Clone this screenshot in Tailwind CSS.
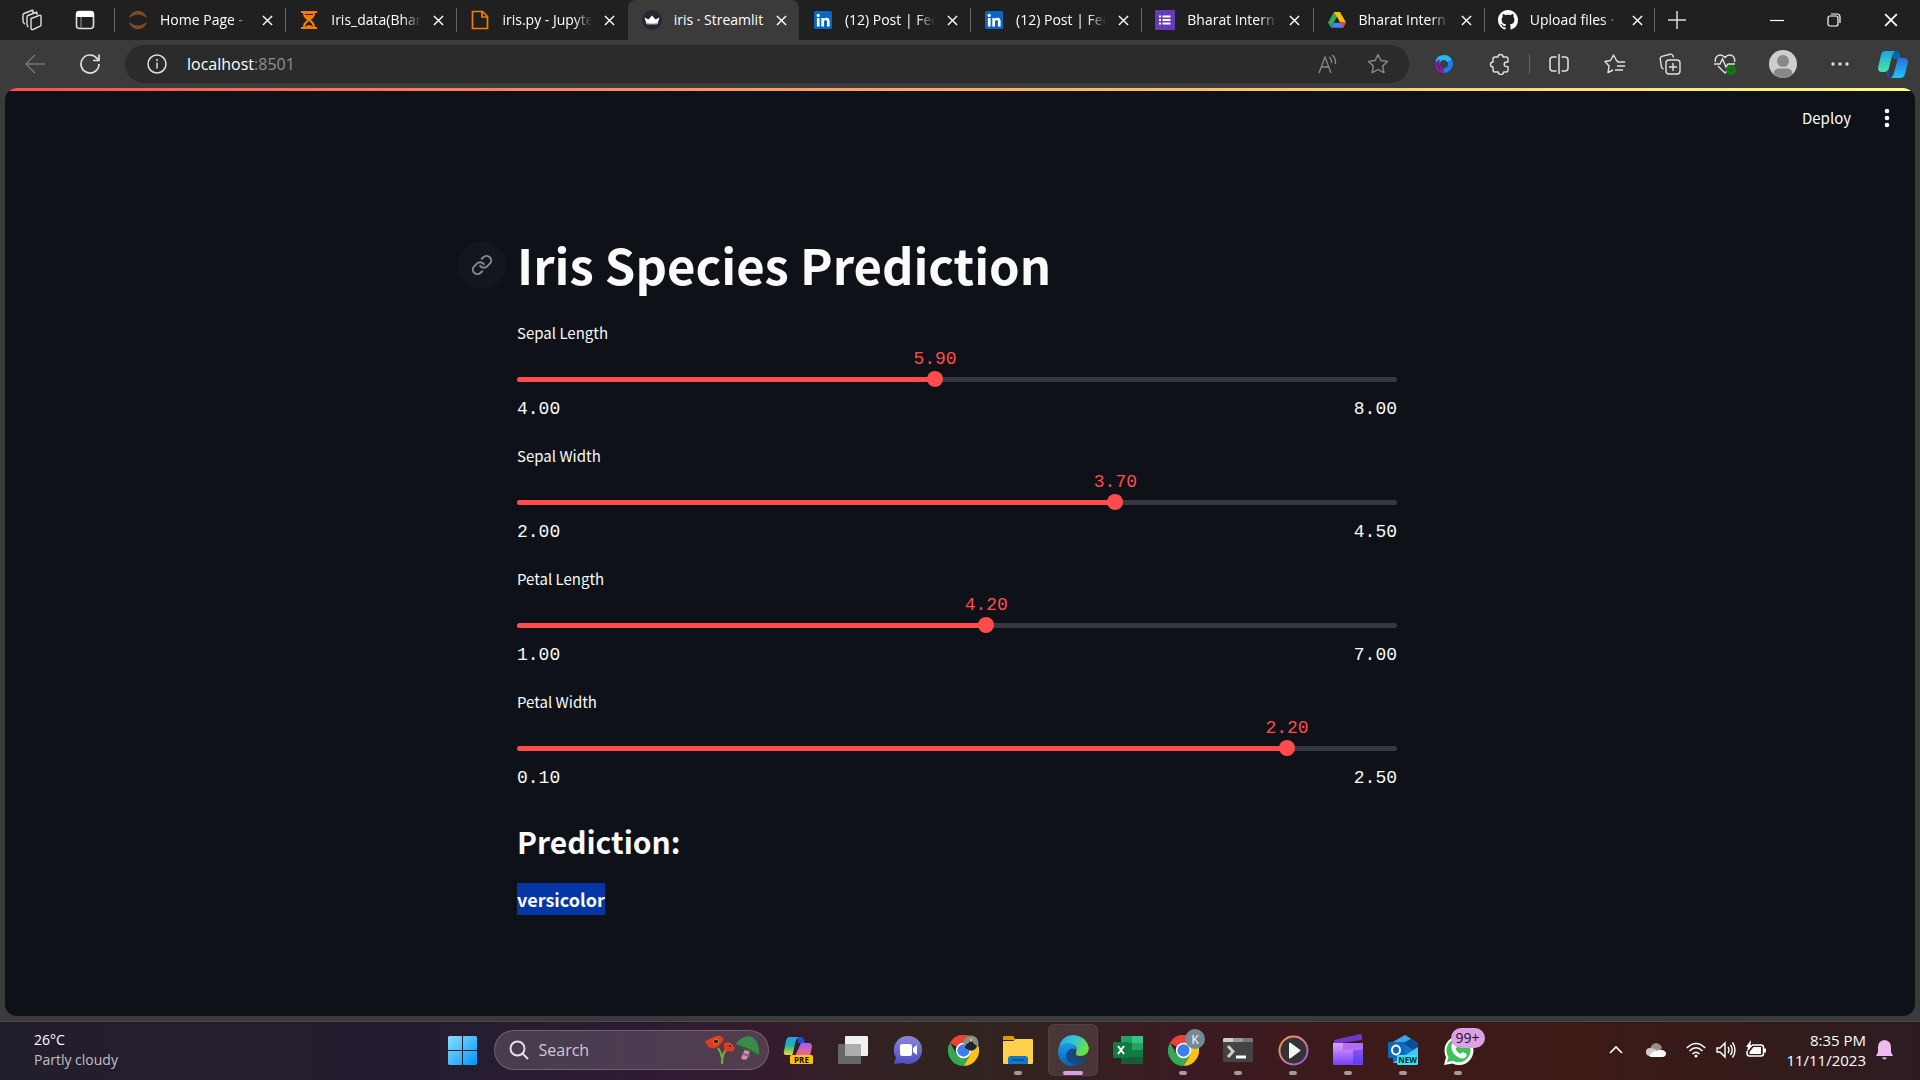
<!DOCTYPE html>
<html lang="en">
<head>
<meta charset="utf-8">
<meta name="viewport" content="width=device-width, initial-scale=1">
<title>iris · Streamlit</title>
<script src="https://cdn.jsdelivr.net/npm/@tailwindcss/browser@4"></script>
</head>
<body class="flex min-h-screen flex-col bg-[#3b3b3b] font-['Open_Sans','Noto_Sans',sans-serif] text-white">

<svg class="hidden" aria-hidden="true">
  <symbol id="x" viewBox="0 0 12 12"><path d="M1 1l10 10M11 1L1 11" fill="none" stroke="currentColor" stroke-width="1.500"/></symbol>
  <symbol id="linkedin" viewBox="0 0 20 20"><rect x="1" y="1" width="18" height="18" rx="1.500" fill="#0a66c2"/><circle cx="5.200" cy="5.400" r="1.600" fill="#fff"/><path d="M3.900 8h2.700v8.400H3.900zM8.300 8h2.500v1.200c.5-.8 1.400-1.400 2.700-1.400 2.500 0 3.100 1.700 3.100 3.900v4.700h-2.600v-4.200c0-1.100-.1-2.200-1.400-2.200s-1.600 1-1.600 2.200v4.200H8.300z" fill="#fff"/></symbol>
  <symbol id="chrome" viewBox="0 0 48 48"><path d="M24 24L3.200 12A24 24 0 0 1 44.800 12z" fill="#ea4335"/><path d="M24 0A24 24 0 0 1 44.800 12H24L13.600 18 3.200 12A24 24 0 0 1 24 0z" fill="#ea4335"/><path d="M44.800 12A24 24 0 0 1 24 48l10.400-18L34 18l-10-6z" fill="#fbc116"/><path d="M3.200 12A24 24 0 0 0 24 48l10.400-18L24 34l-10.400-4z" fill="#34a853"/><circle cx="24" cy="24" r="12" fill="#fff"/><circle cx="24" cy="24" r="9.500" fill="#3b7ded"/></symbol>
</svg>

<!-- Tab strip -->
<header class="flex h-10 bg-[#202020] text-sm">
  <div class="flex w-[114px] shrink-0 items-center gap-8 pl-[21px]">
    <button aria-label="Workspaces"><svg class="h-[22px] w-[22px]" viewBox="0 0 22 22" fill="none" stroke="#ddd" stroke-width="1.400" stroke-linejoin="round"><path d="M10 9.500l8.500-3.200q1.500-.5 1.500 1v8.500q0 1-.8 1.400L12 20.500q-2 .5-2-1.500z"/><path d="M7.500 18Q6 17 6 15.500V8q0-1 1-1.500L16 3M4 15q-2-1-2-3V6q0-1 1-1.500L12 1M16 6V3M12 4V1"/></svg></button>
    <button aria-label="Tab actions"><svg class="h-5 w-5" viewBox="0 0 20 20"><rect x="1.500" y="1.500" width="17" height="17" rx="3" fill="none" stroke="#ddd" stroke-width="1.600"/><path d="M1 7V4q0-3 3-3h12q3 0 3 3v3z" fill="#fff"/><path d="M6 7v11" stroke="#999"/></svg></button>
  </div>
  <nav class="grid flex-1 grid-cols-9" aria-label="Tabs">
    <div class="relative flex items-center gap-3 pl-3.5 before:absolute before:left-0 before:top-2 before:h-6 before:w-px before:bg-[#666]">
      <svg class="h-5 w-5 shrink-0" viewBox="0 0 20 20" fill="#7d4a25"><path d="M1 8a9.200 9.200 0 0 1 18 0Q10 1 1 8zM1 12a9.200 9.200 0 0 0 18 0q-9 7-18 0z"/></svg>
      <a href="#" class="w-[90px] overflow-hidden whitespace-nowrap [mask-image:linear-gradient(to_right,#000_80%,transparent)]">Home Page -</a>
      <button aria-label="Close tab"><svg class="h-[11px] w-[11px]"><use href="#x"/></svg></button>
    </div>
    <div class="relative flex items-center gap-3 pl-3.5 before:absolute before:left-0 before:top-2 before:h-6 before:w-px before:bg-[#666]">
      <svg class="h-5 w-5 shrink-0" viewBox="0 0 20 20"><path d="M2 1h16v2H2zM2 17h16v2H2z" fill="#f57c00"/><path d="M4 3h12c0 4-2 5-4 7 2 2 4 3 4 7H4c0-4 2-5 4-7-2-2-4-3-4-7z" fill="#f57c00"/><path d="M10 11q3 2 4 6H6q1-4 4-6z" fill="#202020"/><path d="M6 4.500h8" stroke="#202020"/><path d="M6 17q4-4 8 0z" fill="#f57c00"/></svg>
      <a href="#" class="w-[90px] overflow-hidden whitespace-nowrap [mask-image:linear-gradient(to_right,#000_80%,transparent)]">Iris_data(Bhar</a>
      <button aria-label="Close tab"><svg class="h-[11px] w-[11px]"><use href="#x"/></svg></button>
    </div>
    <div class="relative flex items-center gap-3 pl-3.5 before:absolute before:left-0 before:top-2 before:h-6 before:w-px before:bg-[#666]">
      <svg class="h-5 w-5 shrink-0" viewBox="0 0 20 20" fill="none" stroke="#f57c00" stroke-width="1.700"><path d="M2.500 1.500h10l5 5v12h-15z"/><path d="M12 1.500V7h5.500"/></svg>
      <a href="#" class="w-[90px] overflow-hidden whitespace-nowrap [mask-image:linear-gradient(to_right,#000_80%,transparent)]">iris.py - Jupyte</a>
      <button aria-label="Close tab"><svg class="h-[11px] w-[11px]"><use href="#x"/></svg></button>
    </div>
    <div class="flex items-center gap-3 rounded-t-lg bg-[#3b3b3b] pl-3.5">
      <svg class="h-5 w-5 shrink-0" viewBox="0 0 20 20"><circle cx="10" cy="10" r="10" fill="#262730"/><path d="M2.500 7.500l4 2L10 5.500l3.500 4 4-2-2 6.500h-11z" fill="#fff"/><path d="M4.200 12.500q6 2 11.600 0l-.5 2H4.700z" fill="#aaa"/></svg>
      <a href="#" aria-current="page" class="w-[90px] whitespace-nowrap">iris · Streamlit</a>
      <button aria-label="Close tab"><svg class="h-[11px] w-[11px]"><use href="#x"/></svg></button>
    </div>
    <div class="flex items-center gap-3 pl-3.5">
      <svg class="h-5 w-5 shrink-0"><use href="#linkedin"/></svg>
      <a href="#" class="w-[90px] whitespace-nowrap [mask-image:linear-gradient(to_right,#000_80%,transparent)]">(12) Post | Fee</a>
      <button aria-label="Close tab"><svg class="h-[11px] w-[11px]"><use href="#x"/></svg></button>
    </div>
    <div class="relative flex items-center gap-3 pl-3.5 before:absolute before:left-0 before:top-2 before:h-6 before:w-px before:bg-[#666]">
      <svg class="h-5 w-5 shrink-0"><use href="#linkedin"/></svg>
      <a href="#" class="w-[90px] whitespace-nowrap [mask-image:linear-gradient(to_right,#000_80%,transparent)]">(12) Post | Fee</a>
      <button aria-label="Close tab"><svg class="h-[11px] w-[11px]"><use href="#x"/></svg></button>
    </div>
    <div class="relative flex items-center gap-3 pl-3.5 before:absolute before:left-0 before:top-2 before:h-6 before:w-px before:bg-[#666]">
      <svg class="h-5 w-5 shrink-0" viewBox="0 0 20 20"><rect width="20" height="20" rx="1" fill="#673ab7"/><path d="M7.500 5.500h8v2h-8zM7.500 9h8v2h-8zM7.500 12.500h8v2h-8zM4 5.500h2v2H4zM4 9h2v2H4zM4 12.500h2v2H4z" fill="#fff"/></svg>
      <a href="#" class="w-[90px] overflow-hidden whitespace-nowrap [mask-image:linear-gradient(to_right,#000_80%,transparent)]">Bharat Intern</a>
      <button aria-label="Close tab"><svg class="h-[11px] w-[11px]"><use href="#x"/></svg></button>
    </div>
    <div class="relative flex items-center gap-3 pl-3.5 before:absolute before:left-0 before:top-2 before:h-6 before:w-px before:bg-[#666]">
      <svg class="h-5 w-5 shrink-0" viewBox="0 0 20 20"><path d="M7 2h6l-3 5.300L4 17.500 1 12.500z" fill="#34a853"/><path d="M7 2h6l6 10.500h-6z" fill="#fbbc04"/><path d="M7 12.500h12l-3 5.200H4z" fill="#4285f4"/><path d="M13 12.500h6l-3 5.200z" fill="#ea4335"/><path d="M10 7.300l3 5.200H7z" fill="#202020"/></svg>
      <a href="#" class="w-[90px] overflow-hidden whitespace-nowrap [mask-image:linear-gradient(to_right,#000_80%,transparent)]">Bharat Intern</a>
      <button aria-label="Close tab"><svg class="h-[11px] w-[11px]"><use href="#x"/></svg></button>
    </div>
    <div class="relative flex items-center gap-3 pl-3.5 before:absolute before:left-0 before:top-2 before:h-6 before:w-px before:bg-[#666] after:absolute after:right-0 after:top-2 after:h-6 after:w-px after:bg-[#666]">
      <svg class="h-5 w-5 shrink-0" viewBox="0 0 16 16" fill="#fff"><path d="M8 0C3.580 0 0 3.580 0 8c0 3.540 2.290 6.530 5.470 7.590.4.070.55-.17.55-.38 0-.19-.01-.82-.01-1.490-2.010.37-2.530-.49-2.690-.94-.09-.23-.48-.94-.82-1.130-.28-.15-.68-.52-.01-.53.63-.01 1.080.58 1.230.82.72 1.210 1.870.87 2.330.66.07-.52.28-.87.51-1.070-1.780-.2-3.640-.89-3.640-3.950 0-.87.31-1.590.82-2.150-.08-.2-.36-1.020.08-2.120 0 0 .67-.21 2.200.82.64-.18 1.320-.27 2-.27s1.360.09 2 .27c1.530-1.040 2.200-.82 2.200-.82.44 1.100.16 1.920.08 2.120.51.56.82 1.270.82 2.150 0 3.070-1.870 3.750-3.650 3.950.29.25.54.73.54 1.480 0 1.070-.01 1.930-.01 2.200 0 .21.15.46.55.38A8.010 8.010 0 0 0 16 8c0-4.420-3.580-8-8-8z"/></svg>
      <a href="#" class="w-[90px] overflow-hidden whitespace-nowrap [mask-image:linear-gradient(to_right,#000_80%,transparent)]">Upload files ·</a>
      <button aria-label="Close tab"><svg class="h-[11px] w-[11px]"><use href="#x"/></svg></button>
    </div>
  </nav>
  <div class="flex w-[265px] shrink-0 items-center pl-[13px] pr-[22px]">
    <button aria-label="New tab"><svg class="h-[18px] w-[18px]" viewBox="0 0 18 18"><path d="M9 0v18M0 9h18" stroke="#ddd" stroke-width="1.500"/></svg></button>
    <div class="ml-auto flex items-center gap-[43px]">
      <button aria-label="Minimize"><svg class="h-3.5 w-3.5" viewBox="0 0 14 14"><path d="M0 7.500h14" stroke="#fff" stroke-width="1.200"/></svg></button>
      <button aria-label="Restore"><svg class="h-3.5 w-3.5" viewBox="0 0 14 14" fill="none" stroke="#fff" stroke-width="1.200"><rect x="1" y="3" width="10" height="10" rx="2"/><path d="M4 1h6q3 0 3 3v6"/></svg></button>
      <button aria-label="Close"><svg class="h-3.5 w-3.5"><use href="#x"/></svg></button>
    </div>
  </div>
</header>

<!-- Address bar -->
<div class="flex h-12 items-center pl-[25px] pr-3 text-[#e0e0e0]">
  <button aria-label="Back"><svg class="h-5 w-5" viewBox="0 0 20 20" fill="none" stroke="#777" stroke-width="1.400"><path d="M20 10H1M10 1L1 10l9 9"/></svg></button>
  <button aria-label="Refresh" class="ml-[35px]"><svg class="h-5 w-5" viewBox="0 0 20 20" fill="none" stroke="currentColor" stroke-width="1.700"><path d="M19 10a9 9 0 1 1-2.200-5.900L18.500 6M19 0.500v6h-6"/></svg></button>
  <div class="ml-[25px] flex h-[38px] flex-1 items-center rounded-full bg-[#2b2b2b] pl-[22px] pr-5">
    <svg class="h-5 w-5" viewBox="0 0 20 20"><circle cx="10" cy="10" r="9" fill="none" stroke="currentColor" stroke-width="1.500"/><path d="M10 8.500v6" stroke="currentColor" stroke-width="1.500"/><circle cx="10" cy="6" r="1" fill="currentColor"/></svg>
    <a href="#" aria-label="Address" class="ml-5 flex-1 text-base text-white">localhost<span class="text-[#8f8f8f]">:8501</span></a>
    <button aria-label="Read aloud" class="mr-[29px]"><svg class="h-5 w-5" viewBox="0 0 20 20" fill="none" stroke="#8a8a8a" stroke-width="1.300"><path d="M1 19L7 3l6 16M3 13h8M11 3q3 2 2.500 6M14 1q4 3 3.500 9"/></svg></button>
    <button aria-label="Add to favorites"><svg class="h-[22px] w-[22px]" viewBox="0 0 22 22" fill="none" stroke="#8a8a8a" stroke-width="1.400" stroke-linejoin="round"><path d="M11 1.500l2.900 6 6.600.9-4.800 4.600 1.200 6.600L11 16.500l-5.900 3.100 1.200-6.600L1.500 8.400l6.600-.9z"/></svg></button>
  </div>
  <div class="ml-[25px] flex items-center">
    <button aria-label="Loop"><svg class="h-5 w-5" viewBox="0 0 20 20" fill="none" stroke-width="5"><path d="M10 3.500A6.500 6.500 0 0 1 10 16.500" stroke="#1f7cf0"/><path d="M10 16.500A6.500 6.500 0 0 1 4 8" stroke="#9b1a9b"/><path d="M3.800 8A6.500 6.500 0 0 1 10 3.500q4 0 5.500 3.500" stroke="#22b8f0"/><path d="M5 6q-3 5 2 9.500" stroke="#4a1fa0" stroke-width="2"/></svg></button>
    <button aria-label="Extensions" class="ml-[35px]"><svg class="h-[22px] w-[22px]" viewBox="0 0 22 22" fill="none" stroke="currentColor" stroke-width="1.400" stroke-linejoin="round"><path d="M6 4h3a2.500 2.500 0 0 1 5 0h3q2 0 2 2v3h-1.500a2.300 2.300 0 0 0 0 4.600H19V17q0 2-2 2h-2.500a2.600 2.600 0 0 1-5.200 0H6q-2 0-2-2v-3a2.500 2.500 0 0 1 0-5V6q0-2 2-2z"/></svg></button>
    <span class="ml-[18px] h-5 w-px bg-[#666]"></span>
    <button aria-label="Split screen" class="ml-[19px]"><svg class="h-5 w-5" viewBox="0 0 20 20" fill="none" stroke="currentColor" stroke-width="1.500"><path d="M7.500 3H4Q1 3 1 6v8q0 3 3 3h3.500M12.500 3H16q3 0 3 3v8q0 3-3 3h-3.500M10 0v20"/></svg></button>
    <button aria-label="Favorites" class="ml-[35px]"><svg class="h-[22px] w-[22px]" viewBox="0 0 22 22" fill="none" stroke="currentColor" stroke-width="1.400" stroke-linejoin="round"><path d="M14 8l-1.500-.5L9.500 2l-3 5.500L1 8.500 5 13l-1 6.500L9 17M13 9h8M13 13h8M11 17h8"/></svg></button>
    <button aria-label="Collections" class="ml-[33px]"><svg class="h-[22px] w-[22px]" viewBox="0 0 22 22" fill="none" stroke="currentColor" stroke-width="1.400"><rect x="7" y="7" width="14" height="14" rx="3"/><path d="M14 10v8M10 14h8M4.500 16Q3 15.500 2.500 14L1.200 6q-.2-2 1.600-2.600L11 1.200q2-.4 2.800 1.300l.7 2"/></svg></button>
    <button aria-label="Browser essentials" class="ml-[33px]"><svg class="h-[22px] w-[22px]" viewBox="0 0 22 22" fill="none" stroke="currentColor" stroke-width="1.400"><path d="M1.500 9Q.5 4.500 4 2.500q4-1.500 7 2 3-3.500 7-2 3.500 2 2.500 6.500M4 13l7 7 2-2M0 11h6l2.500-5 3.500 8 2-3h7"/><circle cx="17" cy="17" r="5" fill="#107c10" stroke="none"/><path d="M15 17l1.500 1.500L19.500 15.500" stroke="#3b3b3b" stroke-width="1"/></svg></button>
    <button aria-label="Profile" class="ml-[33px]"><svg class="h-7 w-7" viewBox="0 0 28 28"><circle cx="14" cy="14" r="14" fill="#d0cecb"/><circle cx="14" cy="11" r="6" fill="#8a8886"/><path d="M4.500 24Q5 18.500 10 18.500h8q5 0 5.500 5.500Q14 32 4.500 24z" fill="#8a8886"/></svg></button>
    <button aria-label="More" class="ml-[34px]"><svg class="h-[18px] w-[18px]" viewBox="0 0 18 18" fill="currentColor"><circle cx="2" cy="9" r="1.700"/><circle cx="9" cy="9" r="1.700"/><circle cx="16" cy="9" r="1.700"/></svg></button>
    <button aria-label="Copilot" class="ml-[29px]"><svg class="h-[30px] w-[30px]" viewBox="0 0 30 30"><defs><linearGradient id="cp1" x2="0" y2="1"><stop stop-color="#1aa6ea"/><stop offset="1" stop-color="#4fe3a0"/></linearGradient><linearGradient id="cp2" x2="0" y2="1"><stop stop-color="#2472e0"/><stop offset="1" stop-color="#25c3f5"/></linearGradient></defs><path d="M17 2q4 0 5 4l1 4h-8l-2-8z" fill="#0c63b0"/><path d="M7 2h10q-2 1-3 5l-3 12q-1 4-4 4H4q-4 0-4-4L3 6q1-4 4-4z" fill="url(#cp1)"/><path d="M9 21l4 7q-4 0-5-3z" fill="#2440d8"/><path d="M20 9h6q4 0 4 4l-3 12q-1 4-5 4h-9q2-1 3-5z" fill="url(#cp2)"/></svg></button>
  </div>
</div>

<!-- Streamlit page -->
<div class="mx-[5px] mb-[5px] flex flex-1 flex-col overflow-hidden rounded-xl bg-[#0e1117] font-['Noto_Sans_CJK_SC','Noto_Sans',sans-serif] text-[#fafafa]">
  <div class="h-[3px] bg-linear-to-r from-[#ff4b4b] to-[#fffd80]"></div>
  <div class="flex h-[54px] items-center justify-end gap-[29px] pr-[21px]">
    <button class="text-[15px]">Deploy</button>
    <button aria-label="Main menu"><svg class="h-5 w-3.5" viewBox="0 0 14 20" fill="currentColor"><circle cx="7" cy="3" r="2.300"/><circle cx="7" cy="10" r="2.300"/><circle cx="7" cy="17" r="2.300"/></svg></button>
  </div>
  
  <div class="pt-[84px] pr-1.5">
  <main class="mx-auto w-full max-w-[880px]">
    <div class="relative">
      <a href="#iris" aria-label="Link to heading" class="absolute top-3 right-full mr-[11px] flex h-12 w-12 items-center justify-center rounded-full bg-[#12161e]"><svg class="h-[22px] w-[22px]" viewBox="0 0 24 24" fill="none" stroke="#85878b" stroke-width="2.200" stroke-linecap="round"><path d="M10 13a5 5 0 0 0 7.540.54l3-3a5 5 0 0 0-7.070-7.070l-1.720 1.710M14 11a5 5 0 0 0-7.540-.54l-3 3a5 5 0 0 0 7.070 7.070l1.710-1.710"/></svg></a>
      <h1 id="iris" class="h-[70px] text-[49px] leading-[70px] font-bold whitespace-nowrap">Iris Species Prediction</h1>
    </div>
    <form class="mt-[22px] flex flex-col gap-[15px]">
      <div class="h-[108px]">
        <label for="sl" class="block text-[15px] leading-6">Sepal Length</label>
        <div class="relative pt-[26px] font-['Liberation_Mono',monospace] text-lg leading-5">
          <output for="sl" class="absolute top-1 -translate-x-1/2 text-[#ff4b4b]" style="left:47.5%">5.90</output>
          <div class="flex h-4 items-center"><div class="h-[5px] flex-1 overflow-hidden rounded-sm bg-[#353840]"><div class="h-full bg-[#ff4b4b]" style="width:47.5%"></div></div></div>
          <input id="sl" type="range" min="4" max="8" step="0.1" value="5.9" class="absolute top-[26px] -left-2 h-4 w-[calc(100%+16px)] appearance-none bg-transparent [&::-webkit-slider-thumb]:h-4 [&::-webkit-slider-thumb]:w-4 [&::-webkit-slider-thumb]:appearance-none [&::-webkit-slider-thumb]:rounded-full [&::-webkit-slider-thumb]:bg-[#ff4b4b]">
          <div class="mt-3 flex justify-between"><span>4.00</span><span>8.00</span></div>
        </div>
      </div>
      <div class="h-[108px]">
        <label for="sw" class="block text-[15px] leading-6">Sepal Width</label>
        <div class="relative pt-[26px] font-['Liberation_Mono',monospace] text-lg leading-5">
          <output for="sw" class="absolute top-1 -translate-x-1/2 text-[#ff4b4b]" style="left:68%">3.70</output>
          <div class="flex h-4 items-center"><div class="h-[5px] flex-1 overflow-hidden rounded-sm bg-[#353840]"><div class="h-full bg-[#ff4b4b]" style="width:68%"></div></div></div>
          <input id="sw" type="range" min="2" max="4.5" step="0.1" value="3.7" class="absolute top-[26px] -left-2 h-4 w-[calc(100%+16px)] appearance-none bg-transparent [&::-webkit-slider-thumb]:h-4 [&::-webkit-slider-thumb]:w-4 [&::-webkit-slider-thumb]:appearance-none [&::-webkit-slider-thumb]:rounded-full [&::-webkit-slider-thumb]:bg-[#ff4b4b]">
          <div class="mt-3 flex justify-between"><span>2.00</span><span>4.50</span></div>
        </div>
      </div>
      <div class="h-[108px]">
        <label for="pl" class="block text-[15px] leading-6">Petal Length</label>
        <div class="relative pt-[26px] font-['Liberation_Mono',monospace] text-lg leading-5">
          <output for="pl" class="absolute top-1 -translate-x-1/2 text-[#ff4b4b]" style="left:53.33%">4.20</output>
          <div class="flex h-4 items-center"><div class="h-[5px] flex-1 overflow-hidden rounded-sm bg-[#353840]"><div class="h-full bg-[#ff4b4b]" style="width:53.33%"></div></div></div>
          <input id="pl" type="range" min="1" max="7" step="0.1" value="4.2" class="absolute top-[26px] -left-2 h-4 w-[calc(100%+16px)] appearance-none bg-transparent [&::-webkit-slider-thumb]:h-4 [&::-webkit-slider-thumb]:w-4 [&::-webkit-slider-thumb]:appearance-none [&::-webkit-slider-thumb]:rounded-full [&::-webkit-slider-thumb]:bg-[#ff4b4b]">
          <div class="mt-3 flex justify-between"><span>1.00</span><span>7.00</span></div>
        </div>
      </div>
      <div class="h-[108px]">
        <label for="pw" class="block text-[15px] leading-6">Petal Width</label>
        <div class="relative pt-[26px] font-['Liberation_Mono',monospace] text-lg leading-5">
          <output for="pw" class="absolute top-1 -translate-x-1/2 text-[#ff4b4b]" style="left:87.5%">2.20</output>
          <div class="flex h-4 items-center"><div class="h-[5px] flex-1 overflow-hidden rounded-sm bg-[#353840]"><div class="h-full bg-[#ff4b4b]" style="width:87.5%"></div></div></div>
          <input id="pw" type="range" min="0.1" max="2.5" step="0.1" value="2.2" class="absolute top-[26px] -left-2 h-4 w-[calc(100%+16px)] appearance-none bg-transparent [&::-webkit-slider-thumb]:h-4 [&::-webkit-slider-thumb]:w-4 [&::-webkit-slider-thumb]:appearance-none [&::-webkit-slider-thumb]:rounded-full [&::-webkit-slider-thumb]:bg-[#ff4b4b]">
          <div class="mt-3 flex justify-between"><span>0.10</span><span>2.50</span></div>
        </div>
      </div>
    </form>
    <h2 class="mt-[21px] text-3xl leading-[44px] font-bold">Prediction:</h2>
    <p class="mt-5 flex text-lg leading-8 font-bold"><span class="bg-[#0437a5]">versicolor</span></p>
  </main>
  </div>
</div>

<!-- Taskbar -->
<footer class="grid h-[59px] grid-cols-[1fr_auto_1fr] border-t border-[#4a4549] bg-[linear-gradient(to_right,#231e2c_0%,#241d2f_22%,#2e1b33_34%,#351c2b_41%,#30241f_48%,#32231f_53%,#3b1a23_62%,#3c1a1a_70%,#3c1a16_82%,#331b19_92%,#2c1c22_100%)] pb-0.5">
  <div class="flex flex-col justify-center pl-[34px] text-sm leading-5"><span>26°C</span><span class="text-[#c4bfc8]">Partly cloudy</span></div>
  <div class="flex items-center">
    <button aria-label="Start" class="flex w-[55px] justify-center"><svg class="h-[29px] w-[29px]" viewBox="0 0 29 29"><defs><linearGradient id="win" x2="1" y2="1"><stop stop-color="#8be0fb"/><stop offset="1" stop-color="#0093f9"/></linearGradient></defs><path d="M1 0h13v14H0V1zM15 0h13l1 1v13H15zM0 15h14v14H1l-1-1zM15 15h14v13l-1 1H15z" fill="url(#win)"/></svg></button>
    <div class="mr-0.5 ml-1 flex h-10 w-[275px] items-center rounded-full border border-white/20 bg-white/15 pl-3.5">
      <svg class="h-5 w-5 shrink-0" viewBox="0 0 20 20" fill="none" stroke="#e5e0e8" stroke-width="2"><circle cx="8.500" cy="8.500" r="7"/><path d="M13.500 13.500L19 19"/></svg>
      <input type="text" aria-label="Search" placeholder="Search" class="ml-2.5 w-0 flex-1 bg-transparent text-base placeholder:text-[#d0c8d2]">
      <svg class="mr-2 h-[30px] w-[56px] shrink-0" viewBox="0 0 56 30"><path d="M18 29q0-11 5-15M18 23q-1-6-4-10" fill="none" stroke="#6fb536" stroke-width="2"/><path d="M1 8q0-3 5-4 5-4 10-3 4 1 3 5l-3 4q-4 4-8 3-4 0-5-4z" fill="#e33a23"/><path d="M20 8q5-2 8 1l3 4q-2 5-6 3-5 1-5-3z" fill="#e33a23"/><circle cx="12" cy="6.500" r="2.500" fill="#3a1a20" stroke="#c59b45"/><circle cx="26" cy="11" r="1.500" fill="#3a1a20" stroke="#c59b45" stroke-width=".5"/><path d="M41 14l-4 9q2 3 6 1l3-8z" fill="#d68d9b"/><path d="M39 19l7 2" stroke="#8b5ca8" stroke-width="2"/><path d="M32 9q5-8 14-8 10 4 9 19-5 0-10-5-7-1-13-6z" fill="#3b8a4b"/><path d="M32 9q7 2 13 5 5 2 10 6-5 1-10-4-7-1-13-7z" fill="#27613a"/></svg>
    </div>
    <button aria-label="Copilot preview" class="flex w-[55px] justify-center"><svg class="h-[30px] w-[30px]" viewBox="0 0 30 30"><defs><linearGradient id="pre1" x2="0" y2="1"><stop stop-color="#259df0"/><stop offset=".5" stop-color="#22b6a0"/><stop offset="1" stop-color="#f0d82c"/></linearGradient><linearGradient id="pre2" x2="0" y2="1"><stop stop-color="#a95cf0"/><stop offset="1" stop-color="#f06a7a"/></linearGradient></defs><path d="M14 2h4q3 0 4 6h-7z" fill="#1d4fd0"/><path d="M6 2h10q-3 1-4 7l-2 9q0 2-3 2H3q-3 0-2-4L3 6q1-4 3-4z" fill="url(#pre1)"/><path d="M18 8h8q3 0 3 4l-2 9H12z" fill="url(#pre2)"/><rect x="7" y="20" width="23" height="9" rx="1.500" fill="#ffc20a"/><text x="18.500" y="27.500" text-anchor="middle" font-size="8" font-weight="700" font-family="Open Sans" fill="#111">PRE</text></svg></button>
    <button aria-label="Task view" class="flex w-[55px] justify-center"><svg class="h-[28px] w-[30px]" viewBox="0 0 30 28"><rect x="7" y="0" width="23" height="20" rx="1" fill="#f0f0f0"/><rect x="0" y="8" width="23" height="20" rx="1" fill="#666"/><path d="M7 8h16v12H7z" fill="#adadad"/></svg></button>
    <button aria-label="Chat" class="flex w-[55px] justify-center"><svg class="h-[28px] w-[28px]" viewBox="0 0 28 28"><defs><linearGradient id="chat" x2="0" y2="1"><stop stop-color="#8b86d8"/><stop offset="1" stop-color="#4c4fc4"/></linearGradient></defs><path d="M14 0a14 14 0 1 1-5 27l-9 1 2-6.500A14 14 0 0 1 14 0z" fill="url(#chat)"/><rect x="6" y="8" width="12" height="12" rx="2" fill="#fff"/><path d="M19 12l4-3v10l-4-3z" fill="#fff"/></svg></button>
    <button aria-label="Chrome" class="flex w-[55px] justify-center"><svg class="h-[31px] w-[31px]" viewBox="0 0 31 31"><use href="#chrome" width="31" height="31"/><circle cx="23" cy="8" r="7.500" fill="#7f9480"/><path d="M17 13q0-4 4-5V4h4v4l4 3q-2 5-7 4.500z" fill="#1d2430"/><circle cx="23" cy="5" r="2" fill="#c9a58a"/></svg></button>
    <button aria-label="File Explorer" class="relative flex h-[50px] w-[55px] items-center justify-center after:absolute after:bottom-0 after:h-1 after:w-2 after:rounded-full after:bg-[#a59a9c]"><svg class="h-[28px] w-[30px]" viewBox="0 0 30 28"><path d="M0 1q0-1 1-1h9l3 4H0z" fill="#e09b06"/><path d="M0 5h10l3-2h16q1 0 1 1v23q0 1-1 1H1q-1 0-1-1z" fill="#ffd04c"/><path d="M5 28v-5q0-3 3-3h14q3 0 3 3v5z" fill="#1176cc"/><path d="M9 24h12" stroke="#0c4d87" stroke-width="1.500"/></svg></button>
    <button aria-label="Edge" class="relative flex w-[55px] justify-center"><span class="flex h-[52px] w-[50px] items-center justify-center rounded-md border border-white/5 bg-white/10 after:absolute after:bottom-px after:h-1 after:w-5 after:rounded-full after:bg-[#d9a0e6]"><svg class="h-[31px] w-[31px]" viewBox="0 0 31 31"><defs><linearGradient id="ed" x2="1" y2=".4"><stop stop-color="#28a8ea"/><stop offset=".5" stop-color="#30c4d8"/><stop offset="1" stop-color="#6be045"/></linearGradient><linearGradient id="ed2" x2="0" y2="1"><stop stop-color="#1c9ce8"/><stop offset="1" stop-color="#0d5fb4"/></linearGradient></defs><path d="M1 12Q4 0 16 0q12 1 15 13-1 8-9 8-5 0-4-3 3-8-6-9-7 0-11 3z" fill="url(#ed)"/><path d="M0 16Q1 8 9 8q8 0 9 6-8-1-8 7 1 8 10 9-5 1-8 1Q0 28 0 16z" fill="url(#ed2)"/><path d="M11 15q4-3 6 0-3 3-1 6 5 5 13 1-4 9-12 8-9-3-9-9 0-4 3-6z" fill="#114a8b"/></svg></span></button>
    <button aria-label="Excel" class="flex w-[55px] justify-center"><svg class="h-[29px] w-[30px]" viewBox="0 0 30 29"><path d="M8 0h22v28H8z" fill="#107c41"/><path d="M8 0h11v7H8z" fill="#21a366"/><path d="M19 0h11v7H19z" fill="#33c481"/><path d="M19 7h11v7H19z" fill="#21a366"/><path d="M8 21h22v7H8z" fill="#185c37"/><rect y="6" width="16" height="16" rx="1" fill="#0f7b40"/><path d="M5 10l6 8M11 10l-6 8" stroke="#fff" stroke-width="2"/></svg></button>
    <button aria-label="Chrome, second profile" class="relative flex h-[50px] w-[55px] items-center justify-center after:absolute after:bottom-0 after:h-1 after:w-2 after:rounded-full after:bg-[#a59a9c]"><svg class="h-[31px] w-[31px] overflow-visible" viewBox="0 0 31 31"><use href="#chrome" width="31" height="31"/><circle cx="27" cy="4" r="10" fill="#768a93"/><text x="27" y="8.500" text-anchor="middle" font-size="12" font-weight="600" font-family="Open Sans" fill="#dde3e6">K</text></svg></button>
    <button aria-label="Terminal" class="relative flex h-[50px] w-[55px] items-center justify-center after:absolute after:bottom-0 after:h-1 after:w-2 after:rounded-full after:bg-[#a59a9c]"><svg class="h-[24px] w-[30px]" viewBox="0 0 30 24"><rect width="30" height="24" rx="1.500" fill="#444"/><path d="M1 0h9v4H0V1z" fill="#ccc"/><path d="M10 0h10v4H10z" fill="#999"/><path d="M20 0h9l1 1v3H20z" fill="#777"/><path d="M5 8l5 5.500L5 19" fill="none" stroke="#ccc" stroke-width="3"/><path d="M13 19h10" stroke="#fff" stroke-width="3"/></svg></button>
    <button aria-label="Media Player" class="relative flex h-[50px] w-[55px] items-center justify-center after:absolute after:bottom-0 after:h-1 after:w-2 after:rounded-full after:bg-[#a59a9c]"><svg class="h-[31px] w-[31px]" viewBox="0 0 31 31"><defs><linearGradient id="mp" x2="1" y2="1"><stop stop-color="#ff9640"/><stop offset=".5" stop-color="#d8809a"/><stop offset="1" stop-color="#8050d8"/></linearGradient></defs><circle cx="15.500" cy="15.500" r="14" fill="#333" stroke="url(#mp)" stroke-width="2"/><path d="M11 8.500q0-1.500 1.500-.7l9.500 7q1 .7 0 1.400l-9.500 7q-1.500.8-1.500-.7z" fill="#f4f4f4"/></svg></button>
    <button aria-label="Clipchamp" class="relative flex h-[50px] w-[55px] items-center justify-center after:absolute after:bottom-0 after:h-1 after:w-2 after:rounded-full after:bg-[#a59a9c]"><svg class="h-[32px] w-[30px]" viewBox="0 0 30 32"><defs><linearGradient id="cc" x2="0" y2="1"><stop stop-color="#e2a2ff"/><stop offset="1" stop-color="#7440f5"/></linearGradient></defs><path d="M1 6l26-6q2 0 2 2v4L1 10z" fill="#6f38c9"/><path d="M0 9h30v21q0 1-1 1H1q-1 0-1-1z" fill="url(#cc)"/><path d="M10 9h20v7H10z" fill="#b46bf7"/><path d="M20 16h10v14H20z" fill="#5a35e8" opacity=".6"/></svg></button>
    <button aria-label="Outlook" class="relative flex h-[50px] w-[55px] items-center justify-center after:absolute after:bottom-0 after:h-1 after:w-2 after:rounded-full after:bg-[#a59a9c]"><svg class="h-[30px] w-[30px]" viewBox="0 0 30 30"><path d="M5 7l12-7 13 8v20H5z" fill="#1273c8"/><path d="M5 7l12-7 6 4-14 8z" fill="#39a7e8"/><path d="M23 4l7 5v9L15 8z" fill="#0a4d98"/><path d="M5 28l25-16v16z" fill="#41c5f3"/><rect y="7" width="16" height="16" rx="1" fill="#0f68bd"/><ellipse cx="8" cy="15" rx="4" ry="4.500" fill="none" stroke="#fff" stroke-width="2"/><rect x="9" y="20" width="21" height="10" rx="1.500" fill="#35e6ea"/><text x="19.500" y="28" text-anchor="middle" font-size="8" font-weight="700" font-family="Open Sans" fill="#102030">NEW</text></svg></button>
    <button aria-label="WhatsApp, 99+ unread" class="relative flex h-[50px] w-[55px] items-center justify-center after:absolute after:bottom-0 after:h-1 after:w-2 after:rounded-full after:bg-[#a59a9c]"><svg class="h-[31px] w-[31px]" viewBox="0 0 31 31"><path d="M1 30l2-8A14.500 14.500 0 1 1 9.500 28.500z" fill="#fff"/><path d="M4 27l1.500-5A12 12 0 1 1 10 26z" fill="#3bc455"/><path d="M9 9q2-2 3.500-.5l1.500 3.500-1.500 2q1.500 3.500 5 5l2-2 3.500 1.500q1.500 1 0 3.500-4 3-9-.5T8.500 13q-.5-2 .5-4z" fill="#fff"/></svg><span class="absolute top-[3px] right-px flex h-5 w-[34px] items-center justify-center rounded-full bg-[#dda0e6] text-sm leading-5 text-[#1b1020]">99+</span></button>
  </div>
  <div class="flex items-center justify-end pr-[27px]">
    <button aria-label="Show hidden icons"><svg class="h-3.5 w-3.5" viewBox="0 0 14 14"><path d="M1 10l6-6 6 6" fill="none" stroke="#fff" stroke-width="1.700"/></svg></button>
    <button aria-label="OneDrive" class="ml-[23px]"><svg class="h-[14px] w-5" viewBox="0 0 20 14"><path d="M4 6q1-5 6-6 5 1 6 5l-6 5z" fill="#9b9090"/><path d="M4 13Q0 13 0 9t4-4q4 0 8 3L5 13z" fill="#d0caca"/><path d="M3 13q4-5 8-5 2-2 5-1 4 1 4 3.500T17 14H5z" fill="#fff"/></svg></button>
    <button aria-label="Network, volume and battery" class="ml-5 flex items-center gap-2.5">
      <svg class="h-5 w-5" viewBox="0 0 20 20" fill="none" stroke="#fff" stroke-width="1.500"><path d="M.7 8q9.300-9 18.600 0M3.500 11q6.500-6.500 13 0M6.500 14q3.500-3.500 7 0"/><circle cx="10" cy="16" r="1.500" fill="#fff" stroke="none"/></svg>
      <svg class="h-5 w-5" viewBox="0 0 20 20" fill="none" stroke="#fff" stroke-width="1.400"><path d="M1 8h3l5-5v14l-5-5H1zM12 7q2 3 0 6M14.500 5q3.500 5 0 10M16.500 2.500q5 7.500 0 15"/></svg>
      <svg class="h-5 w-5" viewBox="0 0 20 20"><path d="M6 5h9q2.500 0 2.500 2.500v6Q17.500 16 15 16H3.500Q1 16 1 13.500V11" fill="none" stroke="#fff" stroke-width="1.500"/><path d="M7.500 7H15v7H3.500v-2zM18 8.500h2v4h-2zM5 0L0 7h2l-1 5 6-7H4.500z" fill="#fff"/></svg>
    </button>
    <div class="ml-5 flex flex-col text-right text-[15px] leading-5"><span>8:35 PM</span><span>11/11/2023</span></div>
    <button aria-label="Notifications" class="ml-2.5"><svg class="h-5 w-[17px]" viewBox="0 0 17 20" fill="#efb9f2"><path d="M8.500 0Q15 1 15 7v5l2 4H0l2-4V7q0-6 6.500-7zM6 17.500h5q-1 2-2.500 2T6 17.500z"/></svg></button>
  </div>
</footer>
</body>
</html>
